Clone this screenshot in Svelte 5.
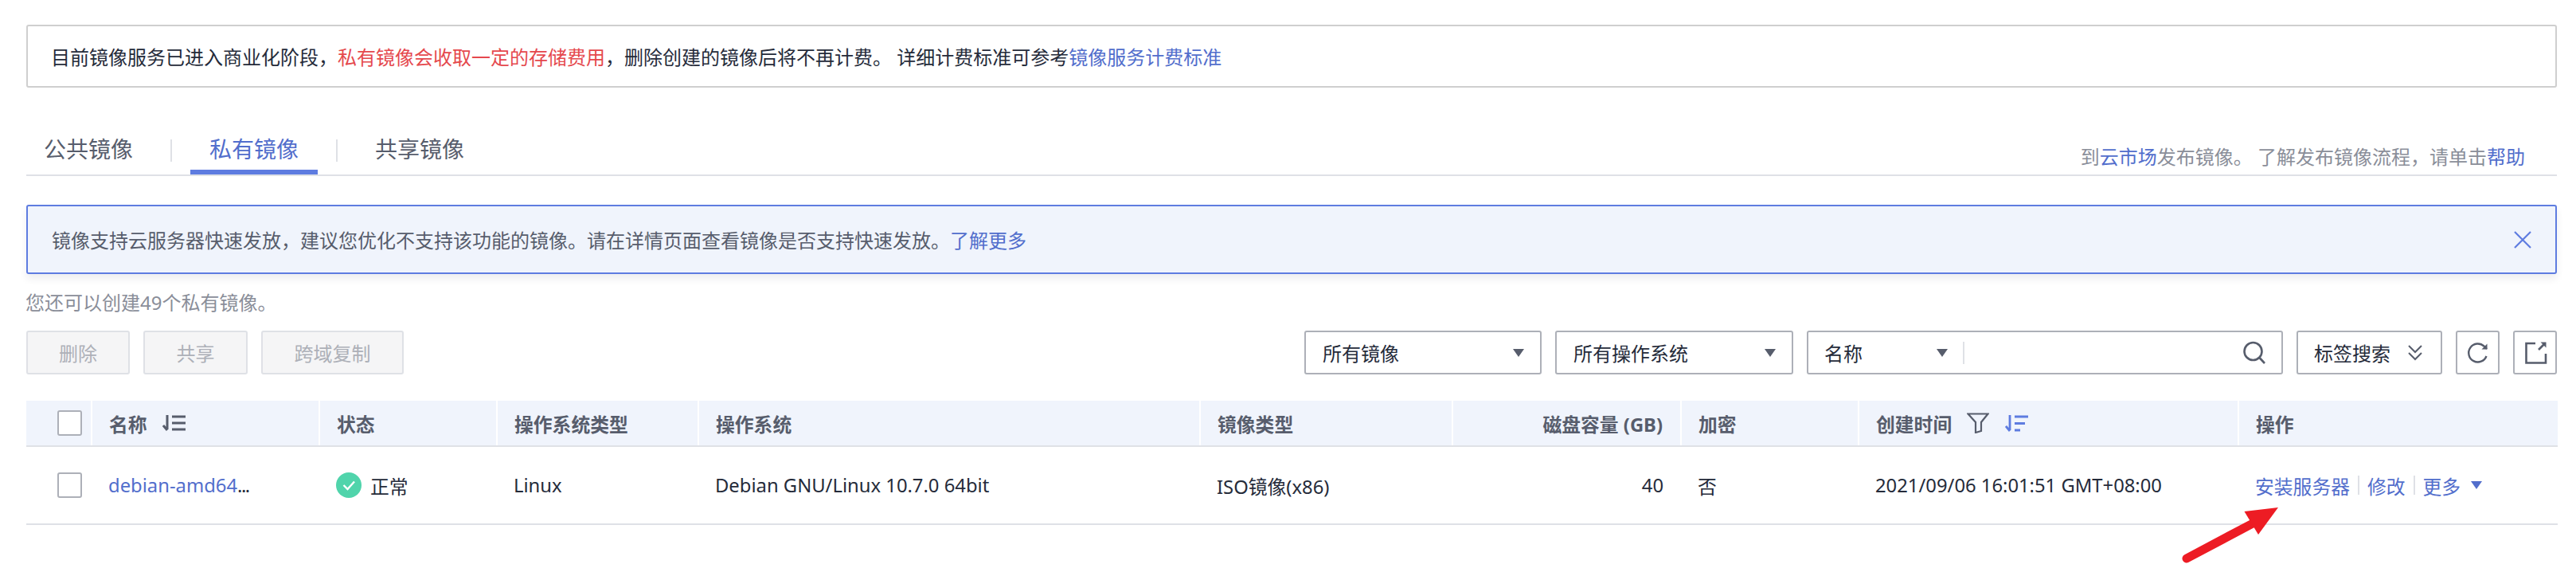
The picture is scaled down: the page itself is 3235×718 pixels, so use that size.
<script>
  const columns = [82, 286, 223, 253, 630, 317, 287, 223, 477, 401];
</script>

<div class="page">
  <div class="notice">目前镜像服务已进入商业化阶段，<span class="red">私有镜像会收取一定的存储费用</span>，删除创建的镜像后将不再计费。 详细计费标准可参考<span class="link">镜像服务计费标准</span></div>

  <div class="tabs">
    <span class="tab">公共镜像</span>
    <i class="tab-sep"></i>
    <span class="tab active">私有镜像</span>
    <i class="tab-sep"></i>
    <span class="tab">共享镜像</span>
    <span class="help">到<span class="link">云市场</span>发布镜像。 了解发布镜像流程，请单击<span class="link">帮助</span></span>
  </div>

  <div class="banner">
    <span>镜像支持云服务器快速发放，建议您优化不支持该功能的镜像。请在详情页面查看镜像是否支持快速发放。<span class="link">了解更多</span></span>
    <svg class="close" width="22" height="22" viewBox="0 0 22 22"><path d="M1 1 21 21M21 1 1 21" stroke="#5e7ce0" stroke-width="2.2" fill="none"/></svg>
  </div>

  <div class="quota">您还可以创建49个私有镜像。</div>

  <div class="toolbar">
    <button class="btn w130">删除</button>
    <button class="btn w131">共享</button>
    <button class="btn w179">跨域复制</button>

    <div class="filters">
      <div class="select s1"><span>所有镜像</span><i class="tri"></i></div>
      <div class="select s2"><span>所有操作系统</span><i class="tri"></i></div>
      <div class="search">
        <div class="search-key"><span>名称</span><i class="tri"></i></div>
        <svg width="30" height="30" viewBox="0 0 30 30" fill="none" stroke="#575d6c" stroke-width="2.6"><circle cx="13.5" cy="13" r="11"/><path d="M21.5 21 28 28"/></svg>
      </div>
      <div class="tag-search">
        <span>标签搜索</span>
        <svg width="20" height="22" viewBox="0 0 20 22" fill="none" stroke="#575d6c" stroke-width="2"><path d="M2 2 10 10 18 2M2 11 10 19 18 11"/></svg>
      </div>
      <div class="icon-btn">
        <svg width="28" height="28" viewBox="0 0 28 28" fill="none" stroke="#575d6c" stroke-width="2.4"><path d="M24.500 18A11.500 11.500 0 1 1 21.500 5.500L25 9"/><path d="M25.500 2.500V9.500H18.500" stroke-width="0" fill="#575d6c"/></svg>
      </div>
      <div class="icon-btn">
        <svg width="30" height="30" viewBox="0 0 30 30" fill="none" stroke="#575d6c" stroke-width="2.6"><path d="M15 3H3.500V27.500H28V16"/><path d="M19 11 27 3"/><path d="M21.500 1.500H28.500V8.500" stroke-width="0" fill="#575d6c"/></svg>
      </div>
    </div>
  </div>

  <table>
    <colgroup>
      {#each columns as width}<col style="width:{width}px" />{/each}
    </colgroup>
    <thead>
      <tr>
        <th class="check"><i class="box"></i></th>
        <th>
          <span class="th-inline">名称
            <svg class="ml" width="29" height="20" viewBox="0 0 29 20" fill="none" stroke="#575d6c" stroke-width="3"><path d="M6 0V18M1 13 6 19"/><path d="M12 2H29M12 10H29M12 18H29"/></svg>
          </span>
        </th>
        <th>状态</th>
        <th>操作系统类型</th>
        <th>操作系统</th>
        <th>镜像类型</th>
        <th class="right">磁盘容量 (GB)</th>
        <th>加密</th>
        <th>
          <span class="th-inline">创建时间
            <svg class="ml" width="28" height="26" viewBox="0 0 28 26" fill="none" stroke="#575d6c" stroke-width="2.2"><path d="M1.500 1.500H26.500L18 12V23L11 25V12Z"/></svg>
            <svg class="ml2" width="29" height="21" viewBox="0 0 29 21" fill="none" stroke="#5e7ce0" stroke-width="2.8"><path d="M6 0V19M1 14 6 20"/><path d="M12 2H29M12 10.500H25M12 19H19"/></svg>
          </span>
        </th>
        <th>操作</th>
      </tr>
    </thead>
    <tbody>
      <tr>
        <td class="check"><i class="box"></i></td>
        <td class="link">debian-amd64<span class="ellipsis">...</span></td>
        <td>
          <span class="status">
            <svg width="32" height="32" viewBox="0 0 32 32"><circle cx="16" cy="16" r="16" fill="#50d4ab"/><path d="M9.500 16 14.500 21 23 11.500" fill="none" stroke="#fff" stroke-width="2.4"/></svg>
            正常
          </span>
        </td>
        <td>Linux</td>
        <td>Debian GNU/Linux 10.7.0 64bit</td>
        <td>ISO镜像(x86)</td>
        <td class="right">40</td>
        <td>否</td>
        <td>2021/09/06 16:01:51 GMT+08:00</td>
        <td>
          <span class="actions">
            <span class="link">安装服务器</span>
            <i class="action-sep"></i>
            <span class="link">修改</span>
            <i class="action-sep"></i>
            <span class="link">更多</span>
            <i class="tri blue"></i>
          </span>
        </td>
      </tr>
    </tbody>
  </table>

  <svg class="red-arrow" width="130" height="80" viewBox="0 0 130 80">
    <path d="M13 71 98 26" stroke="#ed1c24" stroke-width="11" stroke-linecap="round" fill="none"/>
    <path d="M128 7 85.500 12 103 41Z" fill="#ed1c24"/>
  </svg>
</div>

<style>
  :global(body) {
    margin: 0;
    background: #fff;
  }

  .page {
    position: relative;
    height: 718px;
    padding: 31px 24px 0 33px;
    box-sizing: border-box;
    overflow: hidden;
    font-family: "Noto Sans", "Noto Sans CJK SC", sans-serif;
    font-size: 24px;
    color: #252b3a;
  }

  .link { color: #526ecc; }
  .red { color: #e5484d; }

  .notice {
    box-sizing: border-box;
    height: 79px;
    padding: 0 29px;
    display: flex;
    align-items: center;
    white-space: pre;
    border: 2px solid #cfcfcf;
    border-radius: 3px;
  }

  .tabs {
    box-sizing: border-box;
    height: 51px;
    margin-top: 60px;
    display: flex;
    align-items: flex-start;
    border-bottom: 2px solid #dfe1e6;
  }

  .tab {
    box-sizing: border-box;
    width: 160px;
    height: 49px;
    text-align: center;
    font-size: 28px;
    line-height: 34px;
    color: #575d6c;
  }

  .tab:first-child { margin-left: -2px; }

  .tab.active {
    color: #526ecc;
    border-bottom: 6px solid #5e7ce0;
  }

  .tab-sep {
    width: 2px;
    height: 28px;
    margin: 5px 23px 0;
    background: #dfe1e6;
  }

  .help {
    margin-left: auto;
    margin-right: 40px;
    margin-top: 10px;
    line-height: 34px;
    color: #8a8e99;
    white-space: pre;
  }

  .banner {
    box-sizing: border-box;
    height: 87px;
    margin-top: 36px;
    padding: 0 30px 0 30px;
    display: flex;
    align-items: center;
    justify-content: space-between;
    background: #f0f4fc;
    border: 2px solid #5e7ce0;
    border-radius: 3px;
    color: #575d6c;
    box-shadow: 0 6px 10px rgba(37, 43, 58, 0.08);
  }

  .quota {
    margin-top: 18px;
    margin-left: -1px;
    height: 36px;
    line-height: 36px;
    color: #8a8e99;
  }

  .toolbar {
    margin-top: 17px;
    display: flex;
    gap: 17px;
    height: 55px;
  }

  .btn {
    box-sizing: border-box;
    height: 55px;
    padding: 0;
    font: inherit;
    color: #adb0b8;
    background: #f5f5f6;
    border: 2px solid #dfe1e6;
    border-radius: 3px;
  }

  .w130 { width: 130px; }
  .w131 { width: 131px; }
  .w179 { width: 179px; }

  .filters {
    margin-left: auto;
    display: flex;
    gap: 17px;
  }

  .select, .search, .tag-search, .icon-btn {
    box-sizing: border-box;
    height: 55px;
    display: flex;
    align-items: center;
    border: 2px solid #adb0b8;
    border-radius: 3px;
  }

  .select {
    justify-content: space-between;
    padding: 0 20px 0 21px;
  }

  .s1 { width: 298px; }
  .s2 { width: 299px; }

  .search {
    width: 598px;
    padding: 0 19px 0 20px;
    justify-content: space-between;
  }

  .search-key {
    box-sizing: border-box;
    width: 176px;
    height: 28px;
    padding-right: 19px;
    display: flex;
    align-items: center;
    justify-content: space-between;
    border-right: 2px solid #dfe1e6;
  }

  .tag-search {
    width: 183px;
    padding: 0 22px 0 20px;
    justify-content: space-between;
  }

  .icon-btn {
    width: 55px;
    justify-content: center;
  }

  .tri {
    display: block;
    flex: none;
    width: 0;
    height: 0;
    border-left: 7.500px solid transparent;
    border-right: 7.500px solid transparent;
    border-top: 10px solid #575d6c;
  }

  .tri.blue { border-top-color: #526ecc; }

  table {
    margin-top: 33px;
    width: 3179px;
    table-layout: fixed;
    border-collapse: collapse;
    border-spacing: 0;
    font-size: 23.800px;
  }

  th {
    box-sizing: border-box;
    height: 57px;
    padding: 0 22px 0 21px;
    text-align: left;
    font-weight: 700;
    color: #575d6c;
    background: #f0f4fc;
    border-bottom: 2px solid #dfe1e6;
    border-left: 2px solid #fff;
    white-space: nowrap;
  }

  th:first-child { border-left: 0; }

  td {
    box-sizing: border-box;
    height: 98px;
    padding: 0 22px 0 21px;
    border-bottom: 2px solid #dfe1e6;
    white-space: nowrap;
  }

  th.right, td.right { text-align: right; }

  th.check, td.check { padding: 0 0 0 39px; }

  .box {
    display: block;
    box-sizing: border-box;
    width: 31px;
    height: 32px;
    background: #fff;
    border: 2px solid #adb0b8;
    border-radius: 3px;
  }

  .th-inline, .status, .actions {
    display: flex;
    align-items: center;
  }

  .ml { margin-left: 19px; }
  .ml2 { margin-left: 20px; }

  .ellipsis {
    color: #252b3a;
    letter-spacing: -1.500px;
  }

  .status svg { margin-right: 11px; }

  .actions { gap: 10px; }

  .action-sep {
    width: 2px;
    height: 24px;
    background: #dfe1e6;
  }

  .actions .tri { margin-left: 3px; }

  .red-arrow {
    position: absolute;
    left: 2733px;
    top: 630px;
  }
</style>
